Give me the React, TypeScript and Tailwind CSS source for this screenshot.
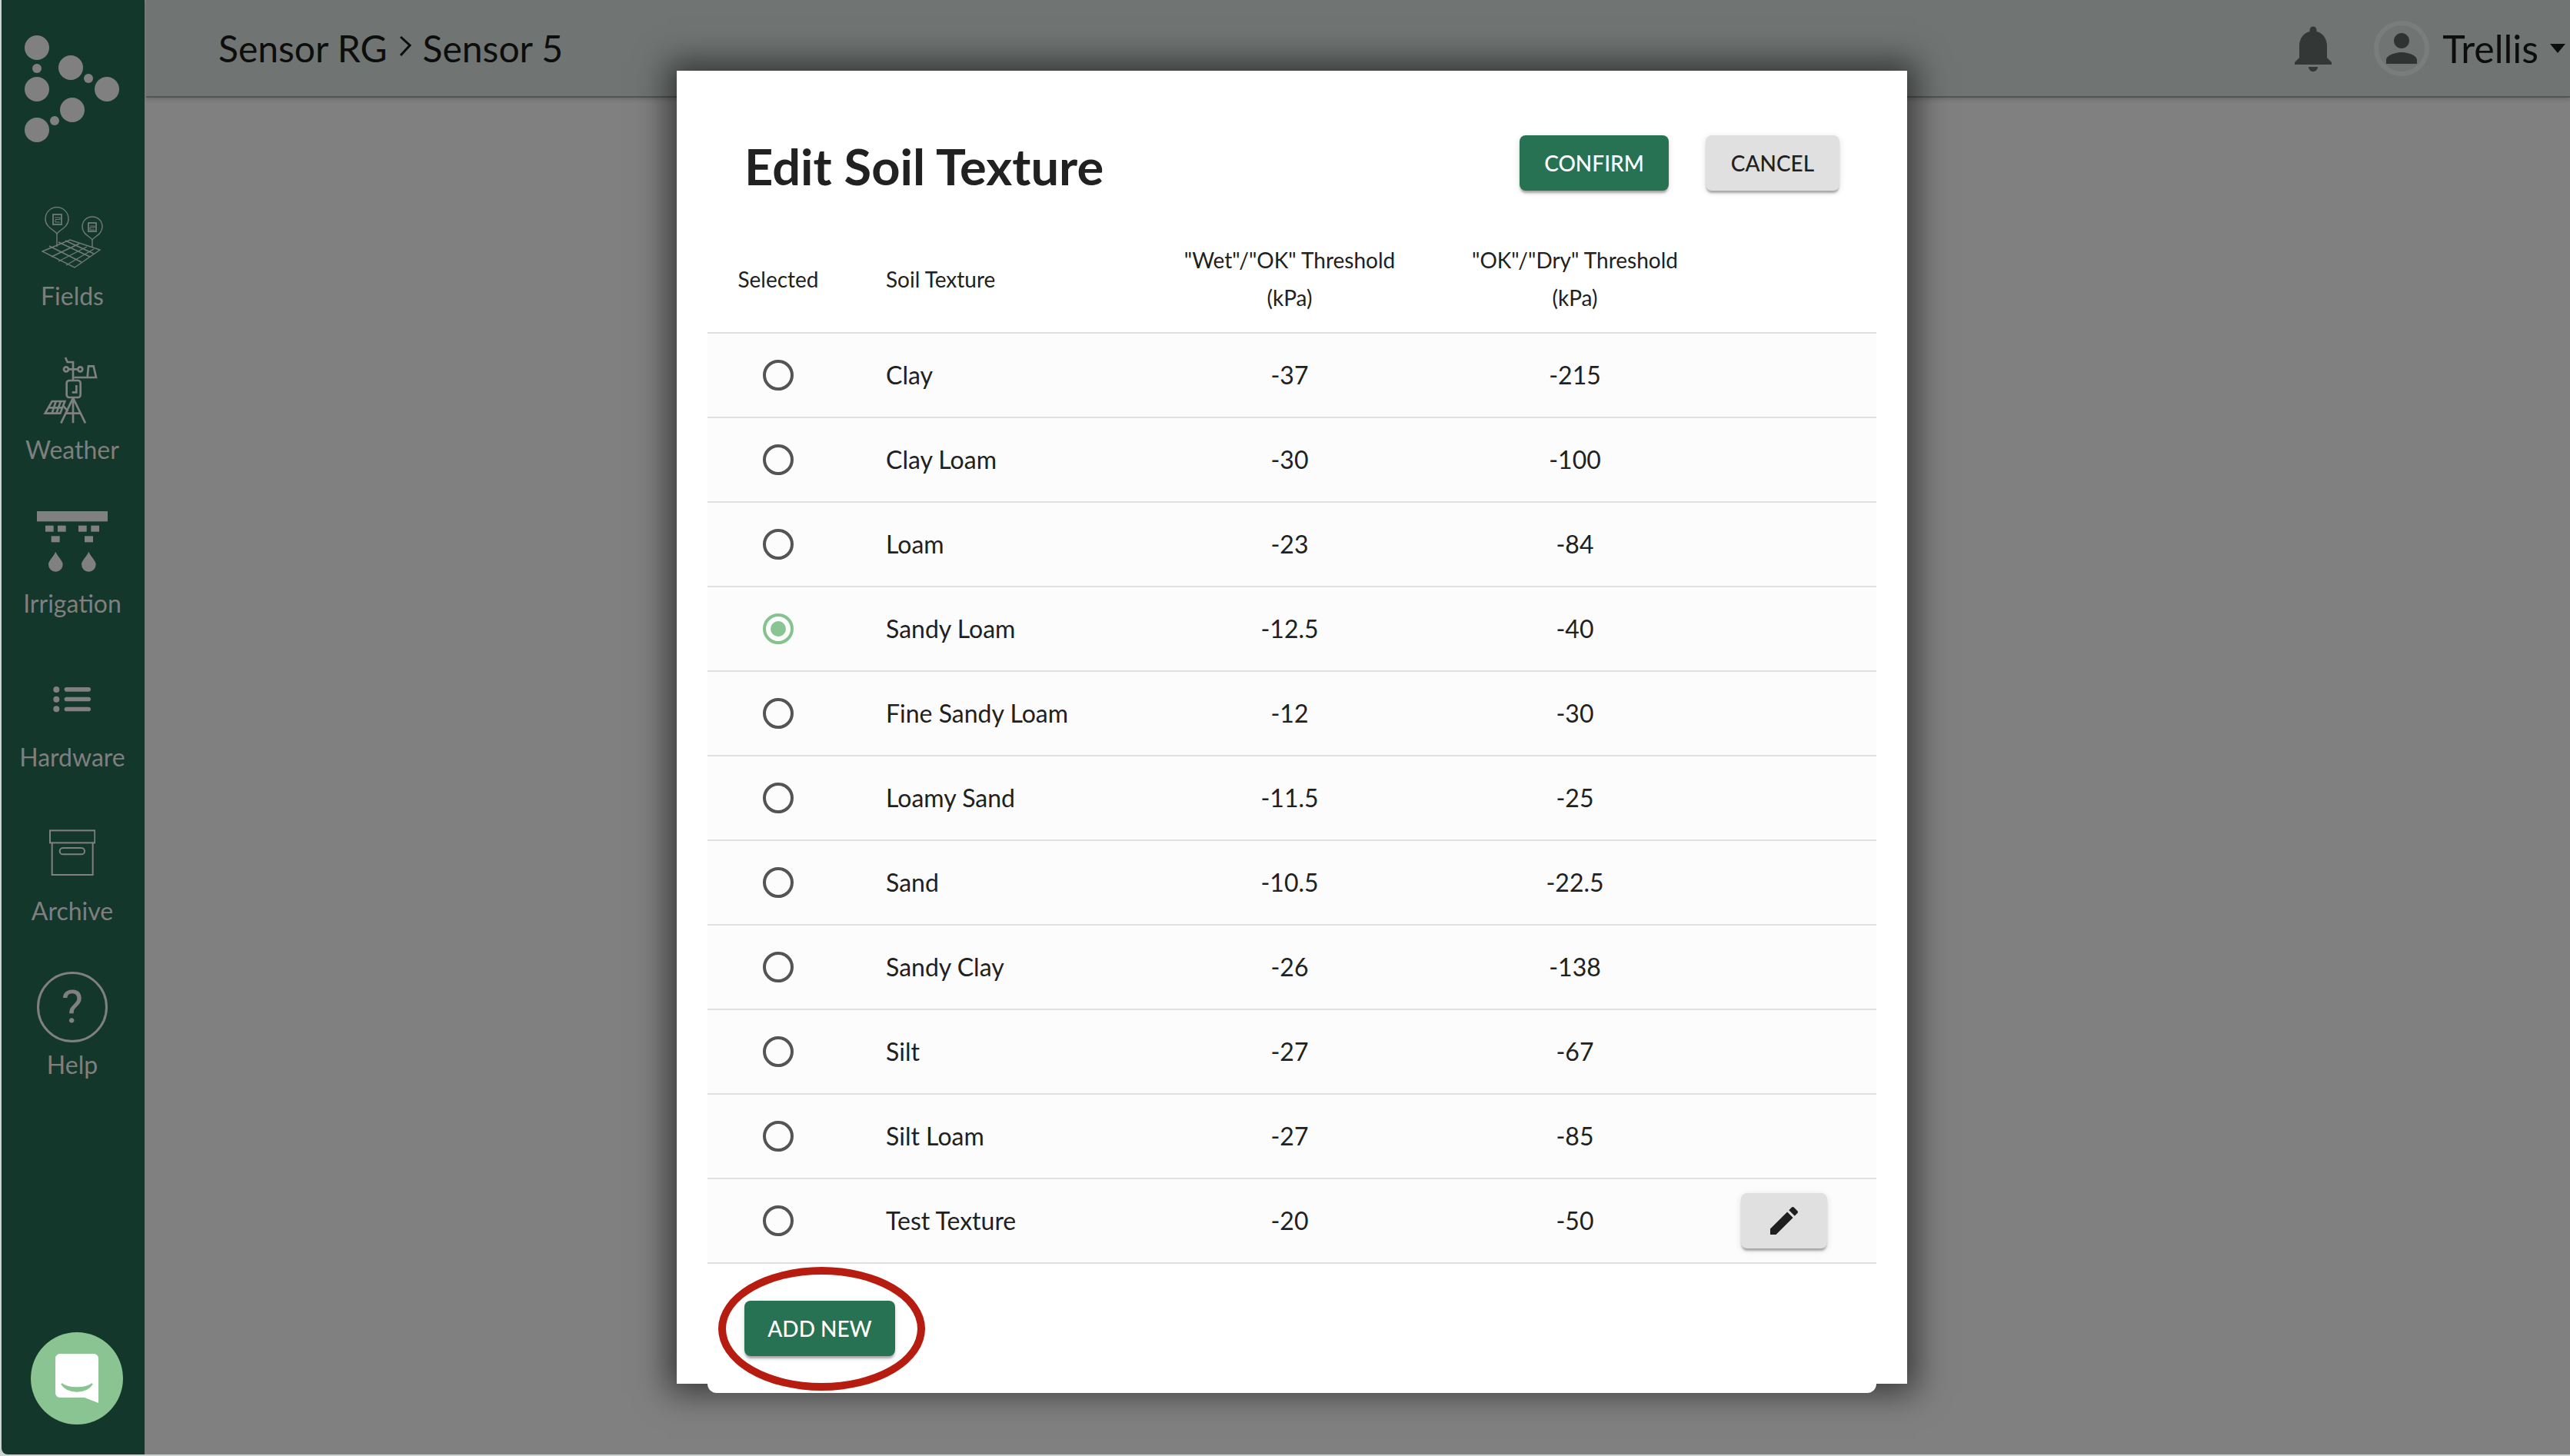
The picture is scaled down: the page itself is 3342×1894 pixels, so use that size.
import type { ReactNode } from "react";

const rows = [
  { name: "Clay", wet: "-37", dry: "-215" },
  { name: "Clay Loam", wet: "-30", dry: "-100" },
  { name: "Loam", wet: "-23", dry: "-84" },
  { name: "Sandy Loam", wet: "-12.5", dry: "-40", selected: true },
  { name: "Fine Sandy Loam", wet: "-12", dry: "-30" },
  { name: "Loamy Sand", wet: "-11.5", dry: "-25" },
  { name: "Sand", wet: "-10.5", dry: "-22.5" },
  { name: "Sandy Clay", wet: "-26", dry: "-138" },
  { name: "Silt", wet: "-27", dry: "-67" },
  { name: "Silt Loam", wet: "-27", dry: "-85" },
  { name: "Test Texture", wet: "-20", dry: "-50", editable: true },
];

const btnShadow = "shadow-[0_4px_3px_-1px_rgba(0,0,0,0.3),0_2px_8px_rgba(0,0,0,0.12)]";

function Logo() {
  const big = [
    [46, 62],
    [90, 88],
    [46, 116],
    [137, 116],
    [92, 143],
    [46, 169],
  ];
  const small = [
    [46, 89],
    [113, 102],
    [69, 157],
  ];
  return (
    <svg width="186" height="205" viewBox="0 0 186 205" className="shrink-0">
      {big.map(([x, y]) => (
        <circle key={`${x}-${y}`} cx={x} cy={y} r="16" fill="#808080" />
      ))}
      {small.map(([x, y]) => (
        <circle key={`${x}-${y}`} cx={x} cy={y} r="6" fill="#808080" />
      ))}
    </svg>
  );
}

function FieldsIcon() {
  return (
    <svg width="80" height="80" viewBox="54 270 80 80" fill="none" stroke="#727a76" strokeWidth="1.4">
      <path d="M74 305C71 300 59 297 59 286C59 277 66 270.5 74 270.5C82 270.5 89 277 89 286C89 297 77 300 74 305Z" />
      <path d="M120 313C118 309 107 306 107 296C107 288 113 283 120 283C127 283 133 288 133 296C133 306 122 309 120 313Z" />
      <path d="M74 305V322M120 313V322" />
      <rect x="69" y="280" width="11" height="13" strokeWidth="1.8" />
      <rect x="115" y="291" width="10" height="11" strokeWidth="1.8" />
      <path d="M71 284H78M78 284V286.5H72V290H78M117 295H123V297H117V300H123" strokeWidth="1" />
      <path d="M55 328L91 313L130 326L97 349Z" />
      <path d="M64 321L106 342M76 316L117 335M85 314L122 331M67 335L103 318M76 341L113 322M86 346L122 325" />
    </svg>
  );
}

function WeatherIcon() {
  return (
    <svg width="77" height="93" viewBox="155 70 231 279" fill="none" stroke="#808080" strokeWidth="8">
      <path d="M242 82L250 100H272V170" />
      <circle cx="245" cy="128" r="9" />
      <circle cx="300" cy="128" r="9" />
      <path d="M254 128H291M276 160H362L352 116H332L328 160" />
      <rect x="247" y="172" width="54" height="66" rx="10" />
      <path d="M285 190V218H268" />
      <path d="M272 240L225 338M272 240L320 338M272 240V338M243 300H300" />
      <path d="M163 300L190 253H240L222 300ZM176 278H232M205 253L190 300M224 253L207 300M235 272L252 292" />
    </svg>
  );
}

function IrrigationIcon() {
  return (
    <svg width="92" height="79" viewBox="144 672 276 237" fill="#808080">
      <rect x="144" y="672" width="276" height="40" />
      <rect x="177" y="728" width="32" height="24" />
      <rect x="225" y="728" width="32" height="24" />
      <rect x="306" y="728" width="32" height="24" />
      <rect x="355" y="728" width="32" height="24" />
      <rect x="200" y="769" width="33" height="24" />
      <rect x="330" y="769" width="33" height="24" />
      <path d="M217 830C205 855 189 865 189 880A28 28 0 0 0 245 880C245 865 229 855 217 830Z" />
      <path d="M346 830C334 855 318 865 318 880A28 28 0 0 0 374 880C374 865 358 855 346 830Z" />
    </svg>
  );
}

function HardwareIcon() {
  return (
    <svg width="50" height="36" viewBox="208 1360 150 108" fill="#808080">
      <circle cx="221" cy="1372" r="12" />
      <circle cx="221" cy="1410" r="12" />
      <circle cx="221" cy="1448" r="12" />
      <rect x="252" y="1363" width="103" height="17" rx="8.5" />
      <rect x="252" y="1401" width="103" height="17" rx="8.5" />
      <rect x="252" y="1440" width="103" height="17" rx="8.5" />
    </svg>
  );
}

function ArchiveIcon() {
  return (
    <svg width="60" height="60" viewBox="192 420 180 180" fill="none" stroke="#808080" strokeWidth="6">
      <rect x="195" y="424" width="175" height="48" />
      <path d="M203 472V597H362V472" />
      <rect x="233" y="492" width="97" height="25" rx="12.5" />
    </svg>
  );
}

function NavItem({ label, icon, gap }: { label: string; icon: ReactNode; gap: string }) {
  return (
    <div className="flex h-[200px] flex-col items-center justify-end pr-[2px]">
      <div className={gap}>{icon}</div>
      <span className="text-[32px] leading-10 text-[#7f7f7f]">{label}</span>
    </div>
  );
}

function Sidebar() {
  return (
    <aside className="flex w-[186px] shrink-0 flex-col rounded-bl-lg bg-[#14372c]">
      <Logo />
      <NavItem label="Fields" icon={<FieldsIcon />} gap="mb-[16px]" />
      <NavItem label="Weather" icon={<WeatherIcon />} gap="mb-[11px]" />
      <NavItem label="Irrigation" icon={<IrrigationIcon />} gap="mb-[21px]" />
      <NavItem label="Hardware" icon={<HardwareIcon />} gap="mb-[36px]" />
      <NavItem label="Archive" icon={<ArchiveIcon />} gap="mb-[26px]" />
      <NavItem
        label="Help"
        gap="mb-[9px]"
        icon={
          <div className="flex h-[92px] w-[92px] items-center justify-center rounded-full border-[3px] border-[#808080] text-[60px] text-[#808080] [font-family:Roboto,sans-serif]">
            ?
          </div>
        }
      />
      <div className="mt-auto mb-[39px] ml-[38px]">
        <svg width="120" height="120" viewBox="0 0 120 120">
          <circle cx="60" cy="60" r="60" fill="#8bc493" />
          <path d="M38 28H82A6 6 0 0 1 88 34V92L70 85H38A6 6 0 0 1 32 79V34A6 6 0 0 1 38 28Z" fill="#fff" />
          <path d="M40 67C48 80 72 80 80 67C72 74 48 74 40 67Z" fill="#8bc493" stroke="#8bc493" strokeWidth="2" />
        </svg>
      </div>
    </aside>
  );
}

function Header() {
  return (
    <header className="ml-[2px] flex h-[127px] items-center justify-between border-b-2 border-[#555] bg-[#707573] pl-[94px] pr-[6px] shadow-[0_3px_5px_rgba(0,0,0,0.15)]">
      <div className="flex items-center text-[48px] leading-none text-[#0d0d0d]">
        <span>Sensor RG</span>
        <svg width="16" height="28" viewBox="0 0 16 28" fill="none" stroke="#0d0d0d" strokeWidth="3" className="mx-[15px] mb-[6px]">
          <path d="M2 2L14 13L2 26" />
        </svg>
        <span>Sensor 5</span>
      </div>
      <div className="flex items-center">
        <svg width="72" height="72" viewBox="0 0 24 24" fill="#333836" className="mr-[43px]">
          <path d="M12 22c1.1 0 2-.9 2-2h-4c0 1.1.89 2 2 2zm6-6v-5c0-3.07-1.64-5.64-4.5-6.32V4c0-.83-.67-1.5-1.5-1.5s-1.5.67-1.5 1.5v.68C7.63 5.36 6 7.92 6 11v5l-2 2v1h16v-1l-2-2z" />
        </svg>
        <div className="flex h-[72px] w-[72px] items-center justify-center rounded-full border-[6px] border-[#7b7d7c]">
          <svg width="60" height="60" viewBox="0 0 24 24" fill="#2f3331" className="shrink-0">
            <path d="M12 12c2.21 0 4-1.79 4-4s-1.79-4-4-4-4 1.79-4 4 1.79 4 4 4zm0 2c-2.67 0-8 1.34-8 4v2h16v-2c0-2.66-5.33-4-8-4z" />
          </svg>
        </div>
        <span className="ml-[17px] text-[50px] leading-none text-[#0d0d0d]">Trellis</span>
        <svg width="20" height="12" viewBox="0 0 20 12" fill="#0d0d0d" className="ml-[15px]">
          <path d="M0 0H20L10 12Z" />
        </svg>
      </div>
    </header>
  );
}

function Radio({ selected }: { selected?: boolean }) {
  if (selected) {
    return (
      <span className="flex h-10 w-10 items-center justify-center rounded-full border-4 border-[#84c38d]">
        <span className="h-5 w-5 rounded-full bg-[#8bc493]" />
      </span>
    );
  }
  return <span className="h-10 w-10 rounded-full border-4 border-[#545454]" />;
}

function SoilTable() {
  const cols = "grid grid-cols-[184px_386px_374px_368px_1fr] items-center";
  return (
    <div className="mt-[46px] text-[#212121]">
      <div className={`${cols} h-[140px] border-b-2 border-[#e0e0e0] text-[28px] leading-[49px]`}>
        <div className="text-center">Selected</div>
        <div className="pl-12">Soil Texture</div>
        <div className="text-center">
          "Wet"/"OK" Threshold
          <br />
          (kPa)
        </div>
        <div className="text-center">
          "OK"/"Dry" Threshold
          <br />
          (kPa)
        </div>
        <div />
      </div>
      {rows.map((row) => (
        <div key={row.name} className={`${cols} h-[110px] border-b-2 border-[#e0e0e0] bg-[#fcfcfc] text-[32px]`}>
          <div className="flex justify-center">
            <Radio selected={row.selected} />
          </div>
          <div className="pl-12">{row.name}</div>
          <div className="text-center">{row.wet}</div>
          <div className="text-center">{row.dry}</div>
          <div className="pl-[32px]">
            {row.editable && (
              <button className={`flex h-[72px] w-[112px] items-center justify-center rounded-lg bg-[#e0e0e0] ${btnShadow}`}>
                <svg width="48" height="48" viewBox="0 0 24 24" fill="#1f1f1f">
                  <path d="M3 17.25V21h3.75L17.81 9.94l-3.75-3.75L3 17.25zM20.71 7.04c.39-.39.39-1.02 0-1.41l-2.34-2.34c-.39-.39-1.02-.39-1.41 0l-1.83 1.83 3.75 3.75 1.83-1.83z" />
                </svg>
              </button>
            )}
          </div>
        </div>
      ))}
    </div>
  );
}

function Modal() {
  return (
    <div className="absolute left-[880px] top-[92px] h-[1708px] w-[1600px] bg-white px-10 shadow-[0_0_40px_12px_rgba(0,0,0,0.55)]">
      <div className="relative h-[1720px] rounded-b-xl bg-white pt-[84px]">
        <div className="flex h-[72px] items-center justify-between px-12">
          <h1 className="mt-2 text-[65px] font-bold leading-none text-[#212121]">Edit Soil Texture</h1>
          <div className="flex gap-12">
            <button className={`h-[72px] w-[194px] rounded-lg bg-[#287254] text-[28px] font-medium text-white ${btnShadow}`}>
              CONFIRM
            </button>
            <button className={`h-[72px] w-[174px] rounded-lg bg-[#e0e0e0] text-[28px] font-medium text-[#212121] ${btnShadow}`}>
              CANCEL
            </button>
          </div>
        </div>
        <SoilTable />
        <div className="relative mt-12 ml-12 w-[196px]">
          <button className={`h-[72px] w-[196px] rounded-lg bg-[#287254] text-[28px] font-medium text-white ${btnShadow}`}>
            ADD NEW
          </button>
          {/* red annotation ring from the screenshot */}
          <div className="pointer-events-none absolute -left-[34px] -top-[44px] h-[161px] w-[269px] rounded-[50%] border-[10px] border-[#b71c10]" />
        </div>
      </div>
    </div>
  );
}

export default function App() {
  return (
    <div className="relative h-[1894px] w-[3342px] overflow-hidden bg-[#cdd3d0] pb-[2px] pl-[2px] [font-family:Lato,sans-serif]">
      <div className="flex h-full">
        <Sidebar />
        <main className="flex-1 bg-[#808080]">
          <Header />
        </main>
      </div>
      <Modal />
    </div>
  );
}
